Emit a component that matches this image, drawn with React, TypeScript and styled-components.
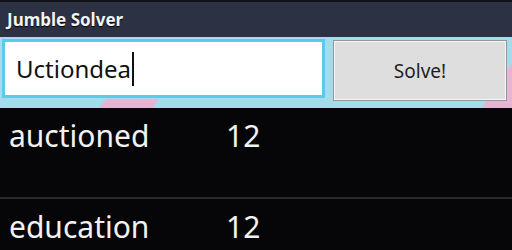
import React from "react"
import styled, { createGlobalStyle } from "styled-components"

/*==================== Data ====================*/

const results = [
    { word: "auctioned", score: 12 },
    { word: "education", score: 12 },
]

/*==================== Component ====================*/

const Wallpaper = () => (
    <Backdrop width="512" height="71" viewBox="0 0 512 71">
        <rect width="512" height="71" fill="#a5dcec" />
        <polygon points="106,62 158,62 153,71 99,71" fill="#e6b5d3" />
        <polygon points="512,26 512,71 482,71 494,50" fill="#e6b5d3" />
    </Backdrop>
)

const App = () => (
    <>
        <GlobalStyle />
        <Screen>
            <TitleBar>Jumble Solver</TitleBar>
            <InputStrip>
                <Wallpaper />
                <InputBox>
                    <InputText>Uctiondea</InputText>
                    <Caret />
                </InputBox>
                <SolveButton>Solve!</SolveButton>
            </InputStrip>
            <List>
                {results.map(item => (
                    <Row key={item.word}>
                        <Word>{item.word}</Word>
                        <Score>{item.score}</Score>
                    </Row>
                ))}
            </List>
        </Screen>
    </>
)

export default App

/*==================== Styles ====================*/

const GlobalStyle = createGlobalStyle`
    html, body {
        margin: 0;
        padding: 0;
        background: #060609;
    }

    body {
        font-family: "Noto Sans", "Open Sans", sans-serif;
    }
`

const Screen = styled.div`
    width: 512px;
    height: 250px;
    overflow: hidden;
    display: flex;
    flex-direction: column;
    background: #060609;

    & > * {
        flex-shrink: 0;
    }
`

const TitleBar = styled.div`
    height: 35px;
    border-top: 2px solid #111318;
    background: #2c3144;
    color: #f4f4f4;
    font-size: 17px;
    font-weight: 700;
    line-height: 35px;
    padding-left: 7px;
    text-shadow: 0 1px 1px #000;
`

const InputStrip = styled.div`
    position: relative;
    height: 71px;
    background: #a5dcec;
    display: flex;
    align-items: flex-start;
    gap: 8px;
    padding: 2px 5px 0 2px;
    box-sizing: border-box;
    overflow: hidden;
`

const Backdrop = styled.svg`
    position: absolute;
    left: 0;
    top: 0;
    display: block;
`

const InputBox = styled.div`
    position: relative;
    flex-shrink: 0;
    width: 306px;
    height: 53px;
    background: #fff;
    border: 3px solid #5ccbe6;
    display: flex;
    align-items: center;
    padding-left: 11px;
    box-sizing: content-box;
`

const InputText = styled.span`
    font-size: 24px;
    color: #111;
`

const Caret = styled.span`
    width: 2px;
    height: 34px;
    background: #111;
    margin-left: 1px;
`

const SolveButton = styled.div`
    position: relative;
    flex-shrink: 0;
    width: 172px;
    height: 59px;
    margin-top: 1px;
    background: #dedede;
    border: 1px solid #959595;
    box-shadow: inset 0 0 0 1px #f6f6f6;
    display: flex;
    align-items: center;
    justify-content: center;
    font-size: 19px;
    color: #1e1e1e;
`

const List = styled.div`
    display: flex;
    flex-direction: column;
`

const Row = styled.div`
    flex-shrink: 0;
    height: 91px;
    display: flex;
    align-items: flex-start;
    padding: 8px 0 0 9px;
    box-sizing: border-box;
    border-bottom: 2px solid #262a30;
    color: #f2f2f2;
    font-size: 30px;
    line-height: 40px;
`

const Word = styled.span`
    width: 217px;
`

const Score = styled.span``
